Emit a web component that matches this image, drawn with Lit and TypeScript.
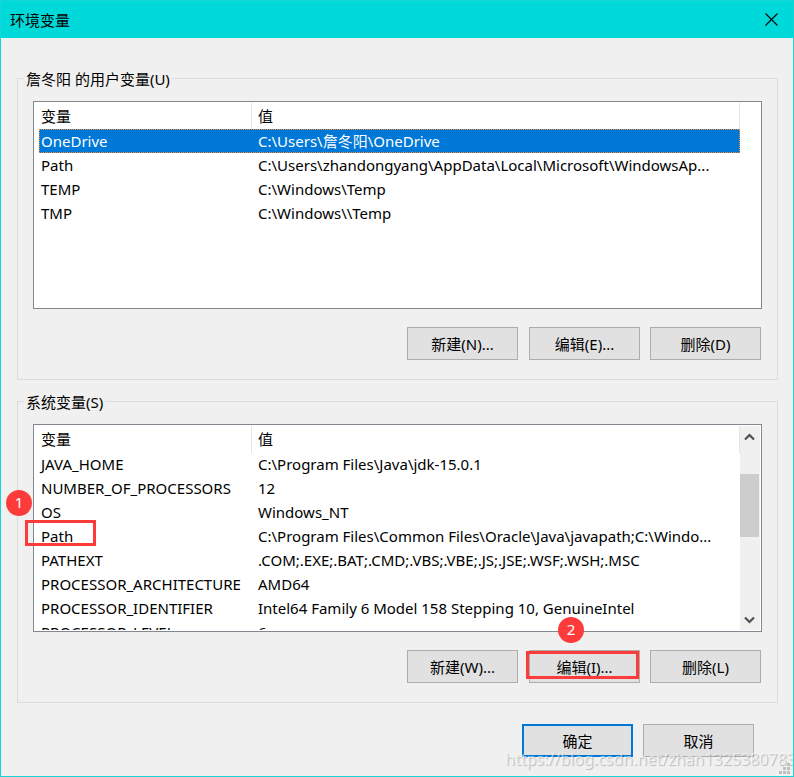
import { LitElement, html, css, svg } from "lit";
import { customElement, property } from "lit/decorators.js";
import { classMap } from "lit/directives/class-map.js";

interface Row {
  name: string;
  value: string;
  selected?: boolean;
}

const userRows: Row[] = [
  { name: "OneDrive", value: "C:\\Users\\詹冬阳\\OneDrive", selected: true },
  { name: "Path", value: "C:\\Users\\zhandongyang\\AppData\\Local\\Microsoft\\WindowsAp..." },
  { name: "TEMP", value: "C:\\Windows\\Temp" },
  { name: "TMP", value: "C:\\Windows\\\\Temp" },
];

const systemRows: Row[] = [
  { name: "JAVA_HOME", value: "C:\\Program Files\\Java\\jdk-15.0.1" },
  { name: "NUMBER_OF_PROCESSORS", value: "12" },
  { name: "OS", value: "Windows_NT" },
  { name: "Path", value: "C:\\Program Files\\Common Files\\Oracle\\Java\\javapath;C:\\Windo..." },
  { name: "PATHEXT", value: ".COM;.EXE;.BAT;.CMD;.VBS;.VBE;.JS;.JSE;.WSF;.WSH;.MSC" },
  { name: "PROCESSOR_ARCHITECTURE", value: "AMD64" },
  { name: "PROCESSOR_IDENTIFIER", value: "Intel64 Family 6 Model 158 Stepping 10, GenuineIntel" },
  { name: "PROCESSOR_LEVEL", value: "6" },
];

@customElement("variable-list")
export class VariableList extends LitElement {
  @property({ attribute: false }) rows: Row[] = [];
  @property({ type: Boolean }) scrollable = false;

  static styles = css`
    :host { display: block; }
    .frame {
      box-sizing: border-box;
      height: 208px;
      border: 1px solid #828790;
      background: #fff;
      padding: 1px;
      display: flex;
      overflow: hidden;
    }
    .table { width: 705px; overflow: hidden; }
    .line { display: grid; grid-template-columns: 213px 1fr; white-space: pre; }
    .head { height: 25px; line-height: 27px; margin-left: 4px; }
    .head .cell { border-right: 1px solid #e5e5e5; }
    .head .value { padding-left: 6px; }
    .rows { margin: 1px 0 0 4px; }
    .row { height: 24px; line-height: 25px; }
    .cell { padding-left: 2px; box-sizing: border-box; min-width: 0; }
    .row .value { padding-left: 6px; }
    .selected {
      background: #0078d7;
      color: #fff;
      outline: 1px dotted #ff8728;
      outline-offset: -1px;
    }
    .bar {
      width: 20px;
      box-sizing: border-box;
      height: 204px;
      background: #f0f0f0;
      margin-left: 0;
      display: flex;
      flex-direction: column;
      align-items: flex-start;
    }
    .arrow { width: 19px; height: 20px; display: block; }
    .up { margin-bottom: 28px; }
    .thumb { width: 19px; height: 63px; background: #cdcdcd; }
    .down { margin-top: auto; }
  `;

  private arrow(kind: string) {
    const d = kind === "up" ? "M5 13.5L9.5 9L14 13.5" : "M5 7.5L9.5 12L14 7.5";
    return html`<svg class="arrow ${kind}" viewBox="0 0 19 20">
      ${svg`<path d=${d} fill="none" stroke="#505050" stroke-width="2.2"></path>`}
    </svg>`;
  }

  render() {
    return html`<div class="frame">
      <div class="table">
        <div class="line head"><span class="cell">变量</span><span class="cell value">值</span></div>
        <div class="rows">
          ${this.rows.map(
            (r) => html`<div class=${classMap({ line: true, row: true, selected: !!r.selected })}><span class="cell">${r.name}</span><span class="cell value">${r.value}</span></div>`
          )}
        </div>
      </div>
      ${this.scrollable
        ? html`<div class="bar">${this.arrow("up")}<div class="thumb"></div>${this.arrow("down")}</div>`
        : ""}
    </div>`;
  }
}

@customElement("app-root")
export class AppRoot extends LitElement {
  static styles = css`
    :host {
      display: block;
      font-family: "Noto Sans", "Noto Sans CJK SC", sans-serif;
      font-size: 15px;
      color: #000;
    }
    .window {
      position: relative;
      box-sizing: border-box;
      width: 794px;
      height: 777px;
      overflow: hidden;
      background: #f0f0f0;
      border: 1px solid #17d4d5;
      display: flex;
      flex-direction: column;
    }
    .title {
      height: 37px;
      flex: none;
      background: #00d9d9;
      display: flex;
      align-items: center;
      justify-content: space-between;
      padding: 0 15px 0 9px;
    }
    .close { width: 13px; height: 13px; display: block; }
    .group {
      box-sizing: border-box;
      width: 761px;
      height: 302px;
      margin-left: 16px;
      border: 1px solid #dcdcdc;
      flex: none;
      padding: 0 15px;
    }
    .user { margin-top: 40px; }
    .system { margin-top: 21px; }
    .legend {
      display: block;
      width: max-content;
      height: 22px;
      line-height: 22px;
      margin: -11px 0 11px -9px;
      padding: 0 2px;
      background: #f0f0f0;
      white-space: pre;
    }
    .buttons { display: flex; justify-content: flex-end; margin-top: 18px; gap: 10px; padding-right: 1px; }
    .button {
      box-sizing: border-box;
      width: 111px;
      height: 33px;
      border: 1px solid #adadad;
      background: #e1e1e1;
      text-align: center;
      line-height: 32px;
      font: inherit;
      padding: 0;
      color: #000;
    }
    .first { margin-right: 1px; }
    .default { border: 2px solid #0078d7; }
    .footer { display: flex; gap: 10px; margin: 21px 39px 0 0; justify-content: flex-end; }
    .mark { position: absolute; box-sizing: border-box; border: 3px solid #fd3b3b; }
    .mark-path { left: 24px; top: 519px; width: 71px; height: 26px; }
    .mark-edit { left: 525px; top: 650px; width: 113px; height: 28px; }
    .badge {
      position: absolute;
      width: 26px;
      height: 26px;
      border-radius: 50%;
      background: #fd3b3b;
      color: #fff;
      text-align: center;
      line-height: 24px;
    }
    .badge-one { left: 5px; top: 489px; }
    .badge-two { left: 557px; top: 616px; }
    .watermark {
      position: absolute;
      left: 504px;
      top: 747px;
      font-size: 16px;
      line-height: 22px;
      white-space: nowrap;
      color: rgba(255, 255, 255, 0.6);
      text-shadow: 1px 1px 1px rgba(100, 100, 100, 0.4);
    }
    .grip { position: absolute; right: 3px; bottom: 2px; width: 11px; height: 11px; }
  `;

  render() {
    return html`<div class="window">
      <div class="title">
        <span>环境变量</span>
        <svg class="close" viewBox="0 0 13 13"><path d="M.5 .5L12.5 12.5M12.5 .5L.5 12.5" fill="none" stroke="#000" stroke-width="1.1"></path></svg>
      </div>
      <section class="group user">
        <span class="legend">詹冬阳 的用户变量(U)</span>
        <variable-list .rows=${userRows}></variable-list>
        <div class="buttons">
          <button class="button first">新建(N)...</button>
          <button class="button">编辑(E)...</button>
          <button class="button">删除(D)</button>
        </div>
      </section>
      <section class="group system">
        <span class="legend">系统变量(S)</span>
        <variable-list .rows=${systemRows} scrollable></variable-list>
        <div class="buttons">
          <button class="button first">新建(W)...</button>
          <button class="button">编辑(I)...</button>
          <button class="button">删除(L)</button>
        </div>
      </section>
      <div class="footer">
        <button class="button default">确定</button>
        <button class="button">取消</button>
      </div>
      <div class="mark mark-path"></div>
      <div class="mark mark-edit"></div>
      <div class="badge badge-one">1</div>
      <div class="badge badge-two">2</div>
      <div class="watermark">https://blog.csdn.net/zhan13253807836</div>
      <svg class="grip" viewBox="0 0 11 11" fill="#bfbfbf">
        <path d="M8 0h3v3h-3zM4 4h3v3h-3zM8 4h3v3h-3zM0 8h3v3h-3zM4 8h3v3h-3zM8 8h3v3h-3z"></path>
      </svg>
    </div>`;
  }
}
